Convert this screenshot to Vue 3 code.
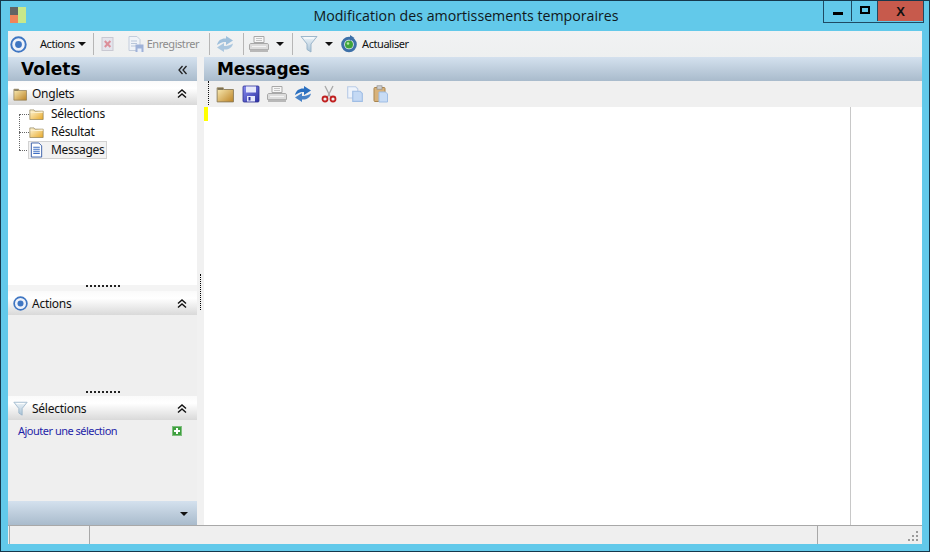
<script setup>
</script>

<template>
  <div class="window">
    <svg class="defs" width="0" height="0" aria-hidden="true">
      <defs>
        <linearGradient id="fold" x1="0" y1="0" x2="1" y2="1">
          <stop offset="0" stop-color="#fbeeb8" />
          <stop offset="1" stop-color="#bd8426" />
        </linearGradient>
        <linearGradient id="foldw" x1="0" y1="0" x2="1" y2="1">
          <stop offset="0" stop-color="#fff8dc" />
          <stop offset="1" stop-color="#e8a928" />
        </linearGradient>
        <linearGradient id="disk" x1="0" y1="0" x2="1" y2="1">
          <stop offset="0" stop-color="#8a8ef0" />
          <stop offset="1" stop-color="#2b2fa0" />
        </linearGradient>
        <linearGradient id="funnel" x1="0" y1="0" x2="0" y2="1">
          <stop offset="0" stop-color="#eef4f8" />
          <stop offset="1" stop-color="#a8c2d6" />
        </linearGradient>
        <symbol id="i-target" viewBox="0 0 16 16">
          <circle cx="8" cy="8" r="6.8" fill="#eef2fa" stroke="#3f76c2" stroke-width="1.8" />
          <circle cx="8" cy="8" r="3.2" fill="#3f76c2" />
        </symbol>
        <symbol id="i-folder" viewBox="0 0 16 16">
          <path d="M1 2.5h5.5v1.5H15.5v11H1z" fill="url(#fold)" stroke="#8a7a58" stroke-width=".8" />
          <path d="M1.4 2.9h4.8v1.3H1.4z" fill="#5e5540" />
        </symbol>
        <symbol id="i-folder-open" viewBox="0 0 18 14">
          <path d="M1 1.5h5l1 1.5h10v10H1z" fill="url(#foldw)" stroke="#8a7a50" stroke-width=".8" />
          <path d="M1.5 4.5 16.5 3.5v1.5H1.5z" fill="#fffbe8" />
        </symbol>
        <symbol id="i-doc" viewBox="0 0 16 16">
          <path d="M2.5 .5h8l3 3v12h-11z" fill="#fff" stroke="#3a5ea8" />
          <path d="M4.5 5h7M4.5 7.2h7M4.5 9.4h7M4.5 11.6h7" stroke="#3f6fc4" stroke-width="1.1" />
        </symbol>
        <symbol id="i-delete" viewBox="0 0 16 16">
          <rect x="2" y="1.5" width="11" height="13" fill="#e4e4ec" stroke="#c9c9d2" />
          <path d="M4.8 5 10.4 11M10.4 5 4.8 11" stroke="#dc8f9a" stroke-width="2" />
        </symbol>
        <symbol id="i-saveas" viewBox="0 0 18 18">
          <path d="M2 1.5h8l3 3v11H2z" fill="#f0f3f8" stroke="#c3cddc" />
          <path d="M4 6h6M4 8.5h6M4 11h5" stroke="#b9c6da" />
          <rect x="8.5" y="9.5" width="8" height="7.5" fill="#9fb2d8" />
          <rect x="10.5" y="13.5" width="4" height="3.5" fill="#e8eefa" />
        </symbol>
        <symbol id="i-refresh" viewBox="0 0 18 18">
          <path d="M1 10C2 5 6 3 10 3.5V1l7 4.5L10 10V7C6.5 6.5 4 8 1 10z" fill="currentColor" />
          <path d="M17 8.5C16 13 12 15 8 14.5V17L1 12.5 8 8v3c3.500.5 6-1 9-2.500z" fill="currentColor" opacity=".85" />
        </symbol>
        <symbol id="i-print" viewBox="0 0 20 18">
          <path d="M5 1.5h10v6H5z" fill="#f6f6f6" stroke="#a8a8a8" />
          <path d="M7 3.5h6M7 5.5h6" stroke="#c4c4c4" />
          <path d="M2 8.5h16c1 0 1.500.6 1.500 1.500v4.500H.5V10c0-.9.6-1.500 1.500-1.500z" fill="#dcdcdc" stroke="#a8a8a8" />
          <path d="M1 14.500h18V17H1z" fill="#b8b8b8" />
          <path d="M3 11.500h14" stroke="#f4f4f4" />
        </symbol>
        <symbol id="i-funnel" viewBox="0 0 18 18">
          <path d="M1 1.500h16l-6 7.500v8l-4-2.500V9z" fill="url(#funnel)" stroke="#94b0c6" stroke-width=".9" />
          <path d="M4 3h10" stroke="#fff" />
        </symbol>
        <symbol id="i-update" viewBox="0 0 18 18">
          <circle cx="9" cy="9.500" r="6.300" fill="none" stroke="#3d70a8" stroke-width="3" />
          <circle cx="9" cy="9.500" r="4" fill="#3ea33a" />
          <circle cx="8" cy="8.500" r="1.300" fill="#b6e6a8" />
          <path d="M10 0v6l4.500-3z" fill="#3d70a8" />
        </symbol>
        <symbol id="i-cut" viewBox="0 0 16 18">
          <path d="M4 1l5.500 11M12 1 6.500 12" stroke="#a9a9a9" stroke-width="1.300" />
          <circle cx="4" cy="14" r="2.500" fill="none" stroke="#c02020" stroke-width="1.800" />
          <circle cx="12" cy="14" r="2.500" fill="none" stroke="#c02020" stroke-width="1.800" />
        </symbol>
        <symbol id="i-copy" viewBox="0 0 16 16">
          <path d="M1.500 1.500h7l2 2v8h-9z" fill="#eef3fb" stroke="#b9cbe6" />
          <path d="M6 5.500h6.500l2 2v7H6z" fill="#c4d9f4" stroke="#9fbde4" />
        </symbol>
        <symbol id="i-paste" viewBox="0 0 16 18">
          <rect x="1" y="2.500" width="11" height="14" rx="1" fill="#d8b27a" stroke="#a9854f" />
          <rect x="4" y=".8" width="5" height="3.400" fill="#cfcfcf" stroke="#8e8e8e" stroke-width=".7" />
          <path d="M6 7h6.500l2 2v8H6z" fill="#c8dcf5" stroke="#9fbde4" />
        </symbol>
        <symbol id="i-collapse" viewBox="0 0 10 10">
          <path d="M1 4.500 5 1l4 3.500M1 8.500 5 5l4 3.500" fill="none" stroke="#111" stroke-width="1.400" />
        </symbol>
        <symbol id="i-left" viewBox="0 0 10 10">
          <path d="M4.500 1 1 5l3.500 4M8.500 1 5 5l3.500 4" fill="none" stroke="#222" stroke-width="1.300" />
        </symbol>
      </defs>
    </svg>

    <header class="titlebar">
      <div class="logo">
        <i class="l1"></i><i class="l2"></i><i class="l3"></i>
      </div>
      <div class="title">Modification des amortissements temporaires</div>
      <div class="winbtns">
        <div class="wb wb-min"><span></span></div>
        <div class="wb wb-max"><span></span></div>
        <div class="wb wb-close">X</div>
      </div>
    </header>

    <div class="client">
      <div class="mainbar">
        <svg class="ic17 first"><use href="#i-target" /></svg>
        <span class="tbtext actions">Actions</span><b class="caret small"></b>
        <span class="sep s1"></span>
        <svg class="ic16 del"><use href="#i-delete" /></svg>
        <svg class="ic18 save"><use href="#i-saveas" /></svg>
        <span class="tbtext dim">Enregistrer</span>
        <span class="sep s2"></span>
        <svg class="ic18 faded"><use href="#i-refresh" /></svg>
        <span class="sep s3"></span>
        <svg class="ic20 prn"><use href="#i-print" /></svg>
        <b class="caret c-prn"></b>
        <span class="sep s4"></span>
        <svg class="ic18 fil"><use href="#i-funnel" /></svg>
        <b class="caret c-fil"></b>
        <svg class="ic18 upd"><use href="#i-update" /></svg>
        <span class="tbtext act">Actualiser</span>
      </div>

      <div class="body">
        <aside class="left">
          <div class="bluehead volets">
            <span>Volets</span>
            <svg class="ic10"><use href="#i-left" /></svg>
          </div>

          <div class="panehead">
            <svg class="ic14"><use href="#i-folder" /></svg>
            <span>Onglets</span>
            <svg class="ic10 chev"><use href="#i-collapse" /></svg>
          </div>
          <div class="tree">
            <div class="tree-line"></div>
            <div class="node">
              <span class="dash"></span>
              <svg class="folderic"><use href="#i-folder-open" /></svg>
              <span class="nlabel">Sélections</span>
            </div>
            <div class="node">
              <span class="dash"></span>
              <svg class="folderic"><use href="#i-folder-open" /></svg>
              <span class="nlabel">Résultat</span>
            </div>
            <div class="node">
              <span class="dash"></span>
              <span class="selected">
                <svg class="docic"><use href="#i-doc" /></svg>
                <span class="nlabel">Messages</span>
              </span>
            </div>
          </div>
          <div class="grip"><span></span></div>

          <div class="panehead">
            <svg class="ic16b"><use href="#i-target" /></svg>
            <span>Actions</span>
            <svg class="ic10 chev"><use href="#i-collapse" /></svg>
          </div>
          <div class="pane-actions"></div>
          <div class="grip tall"><span></span></div>

          <div class="panehead">
            <svg class="ic16b"><use href="#i-funnel" /></svg>
            <span>Sélections</span>
            <svg class="ic10 chev"><use href="#i-collapse" /></svg>
          </div>
          <div class="pane-sel">
            <span class="link">Ajouter une sélection</span>
            <span class="plus"></span>
          </div>
          <div class="bluehead bottom"><b class="caret"></b></div>
        </aside>

        <div class="splitter"><span class="dots"></span></div>

        <main class="mainpane">
          <div class="bluehead messages"><span>Messages</span></div>
          <div class="subbar">
            <span class="vdots"></span>
            <svg class="sb"><use href="#i-folder" /></svg>
            <svg class="sb">
              <rect x="1" y="1" width="16" height="16" rx="1" fill="url(#disk)" stroke="#2b2f90" stroke-width=".8" />
              <rect x="4" y="1.500" width="10" height="6" fill="#e6e8fb" />
              <rect x="5" y="11" width="8" height="5.500" fill="#e6e8fb" />
              <rect x="6.500" y="12" width="2" height="3.500" fill="#2b2fa0" />
            </svg>
            <svg class="sb pr"><use href="#i-print" /></svg>
            <svg class="sb blue"><use href="#i-refresh" /></svg>
            <svg class="sb"><use href="#i-cut" /></svg>
            <svg class="sb"><use href="#i-copy" /></svg>
            <svg class="sb"><use href="#i-paste" /></svg>
          </div>
          <div class="content">
            <div class="marker"></div>
            <div class="vline"></div>
          </div>
        </main>
      </div>

      <footer class="status">
        <div class="st st1"></div>
        <div class="st st2"></div>
        <div class="st st3">
          <svg class="gripper" width="11" height="11" viewBox="0 0 11 11">
            <g fill="#9a9a9a">
              <rect x="8" y="0" width="2" height="2" />
              <rect x="4" y="4" width="2" height="2" />
              <rect x="8" y="4" width="2" height="2" />
              <rect x="0" y="8" width="2" height="2" />
              <rect x="4" y="8" width="2" height="2" />
              <rect x="8" y="8" width="2" height="2" />
            </g>
          </svg>
        </div>
      </footer>
    </div>
  </div>
</template>

<style scoped>
.defs { display: block; height: 0; width: 0; overflow: hidden; }
.window {
  width: 930px;
  height: 552px;
  box-sizing: border-box;
  border: 1px solid #16384c;
  background: #62c9ea;
  display: flex;
  flex-direction: column;
  font-family: "Noto Sans", "Open Sans", sans-serif;
  color: #111;
  overflow: hidden;
}
.titlebar {
  height: 30px;
  display: flex;
  align-items: flex-start;
  flex: none;
}
.logo {
  width: 16px;
  height: 16px;
  margin: 6px 0 0 9px;
  display: grid;
  grid-template-columns: 8px 8px;
  grid-template-rows: 8px 8px;
  flex: none;
}
.logo .l1 { background: #646464; }
.logo .l2 { background: #f0845a; }
.logo .l3 { background: #c8e88a; grid-column: 2; grid-row: 1 / 3; }
.title {
  flex: 1;
  text-align: center;
  font-size: 14.2px;
  line-height: 30px;
  font-family: "Open Sans", sans-serif;
  color: #101820;
  padding-left: 83px;
  white-space: nowrap;
}
.winbtns {
  display: flex;
  height: 21px;
  margin-right: 5px;
  border: 1px solid #1f4a63;
  border-top: 0;
  flex: none;
}
.wb { height: 20px; display: flex; align-items: center; justify-content: center; }
.wb-min { width: 27px; border-right: 1px solid #1f4a63; }
.wb-min span { width: 10px; height: 3px; background: #000; margin-top: 5px; }
.wb-max { width: 25px; border-right: 1px solid #1f4a63; }
.wb-max span { width: 6px; height: 4px; border: 2px solid #000; margin-top: -2px; }
.wb-close {
  width: 45px;
  background: #c75a4c;
  font: bold 13px "Liberation Sans", sans-serif;
  color: #111;
}

.client {
  margin: 0 7px 7px 7px;
  flex: 1;
  min-height: 0;
  display: flex;
  flex-direction: column;
  background: #efefef;
}
.mainbar {
  height: 26px;
  flex: none;
  display: flex;
  align-items: center;
  background: linear-gradient(#f1f2f3, #eef0f0);
}
.tbtext { font: 11px/14px "Noto Sans", sans-serif; white-space: nowrap; letter-spacing: -0.45px; color: #111; }
.tbtext.dim { color: #8c8c8c; margin-left: 2px; }
.ic16 { width: 16px; height: 16px; flex: none; }
.ic17 { width: 17px; height: 17px; flex: none; }
.ic18 { width: 18px; height: 18px; flex: none; }
.ic20 { width: 20px; height: 18px; flex: none; }
.ic10 { width: 10px; height: 10px; flex: none; }
.first { margin-left: 2px; }
.actions { margin-left: 13px; }
.caret {
  display: block;
  width: 0;
  height: 0;
  border-left: 4px solid transparent;
  border-right: 4px solid transparent;
  border-top: 4px solid #111;
  flex: none;
}
.caret.small { margin-left: 3px; }
.sep { width: 1px; height: 22px; background: #b6b6b6; flex: none; }
.s1 { margin-left: 7px; }
.del { margin-left: 6px; }
.save { margin-left: 11px; }
.s2 { margin-left: 10px; }
.faded { margin-left: 6px; color: #9fc0dc; }
.s3 { margin-left: 9px; }
.prn { margin-left: 5px; }
.c-prn { margin-left: 7px; }
.s4 { margin-left: 8px; }
.fil { margin-left: 7px; }
.c-fil { margin-left: 7px; }
.upd { margin-left: 7px; }
.tbtext.act { margin-left: 4px; }

.body { flex: 1; min-height: 0; display: flex; }
.left { width: 189px; flex: none; display: flex; flex-direction: column; }
.bluehead {
  height: 24px;
  flex: none;
  box-sizing: border-box;
  background: linear-gradient(#d4e1ee, #a9bbcc);
  display: flex;
  align-items: center;
  padding-top: 1px;
  font: bold 17px/23px "DejaVu Sans", sans-serif;
  color: #000;
}
.volets { padding-left: 13px; padding-right: 9px; justify-content: space-between; }
.messages { padding-left: 13px; letter-spacing: -0.15px; }
.bottom { justify-content: flex-end; padding-right: 9px; }
.panehead {
  height: 24px;
  flex: none;
  box-sizing: border-box;
  display: flex;
  align-items: center;
  padding-top: 1px;
  font: 12px/23px "Noto Sans", sans-serif;
  letter-spacing: -0.25px;
  background: linear-gradient(#fafafa 0%, #ffffff 30%, #d9d9d9 100%);
  padding-left: 5px;
  color: #111;
}
.ic14 { width: 14px; height: 14px; margin-right: 5px; flex: none; }
.ic16b { width: 15px; height: 15px; margin-right: 4px; flex: none; }
.chev { margin-left: auto; margin-right: 10px; }
.tree { height: 180px; background: #fff; flex: none; position: relative; }
.tree-line {
  position: absolute;
  left: 11px;
  top: 9px;
  height: 36px;
  border-left: 1px dotted #666;
}
.node { height: 18px; display: flex; align-items: center; }
.dash { width: 10px; margin-left: 11px; border-top: 1px dotted #666; flex: none; }
.folderic { width: 15px; height: 13px; margin-right: 7px; flex: none; }
.docic { width: 15px; height: 16px; margin-right: 7px; flex: none; }
.nlabel { font: 12px/16px "Noto Sans", sans-serif; letter-spacing: -0.3px; color: #111; }
.selected {
  display: flex;
  align-items: center;
  background: #f2f2f2;
  border: 1px solid #d2d2d2;
  height: 18px;
  box-sizing: border-box;
  padding-right: 2px;
  margin-left: -1px;
}
.grip { height: 6px; flex: none; display: flex; justify-content: center; align-items: flex-start; background: #f4f4f4; }
.grip.tall { height: 9px; background: #efefef; align-items: center; }
.grip span { width: 34px; border-top: 2px dotted #222; }
.pane-actions { height: 72px; flex: none; background: #efefef; }
.pane-sel { flex: 1; min-height: 0; padding: 4px 0 0 10px; display: flex; align-items: flex-start; background: #efefef; }
.link { font: 11px/14px "Noto Sans", sans-serif; color: #1f1fa8; letter-spacing: -0.5px; white-space: nowrap; }
.plus {
  width: 10px;
  height: 10px;
  margin: 2px 15px 0 auto;
  background:
    linear-gradient(#fff, #fff) center / 6px 2px no-repeat,
    linear-gradient(#fff, #fff) center / 2px 6px no-repeat,
    #3fa03f;
  border: 1px solid #7fbf7f;
  box-sizing: border-box;
}

.splitter { width: 7px; flex: none; background: #f1f1f1; position: relative; }
.dots {
  position: absolute;
  left: 3px;
  top: 217px;
  height: 36px;
  border-left: 1px dotted #000;
}
.mainpane {
  flex: 1;
  min-width: 0;
  display: flex;
  flex-direction: column;
}
.subbar {
  height: 26px;
  flex: none;
  display: flex;
  align-items: center;
  padding-left: 4px;
  gap: 8px;
  background: #f0f0f0;
}
.vdots { width: 0; height: 24px; border-left: 1px dotted #111; align-self: flex-start; margin-right: -1px; }
.sb { width: 18px; height: 18px; flex: none; }
.sb.pr { width: 20px; margin: 0 -1px; }
.blue { color: #2a6fc0; }
.content { flex: 1; min-height: 0; background: #fff; display: flex; }
.marker { width: 4px; height: 14px; background: #ffff00; flex: none; }
.vline { width: 1px; background: #c8c8c8; margin-left: 642px; flex: none; }

.status {
  height: 19px;
  flex: none;
  display: flex;
  border-top: 1px solid #a8a8a8;
  box-sizing: border-box;
  background: #efefef;
}
.st { height: 18px; box-sizing: border-box; }
.st1 { width: 81px; border-left: 1px solid #a8a8a8; border-right: 1px solid #a8a8a8; margin-left: 1px; }
.st2 { width: 728px; border-right: 1px solid #a8a8a8; }
.st3 { flex: 1; display: flex; justify-content: flex-end; align-items: flex-end; padding: 0 3px 2px 0; }
</style>

<style>
html, body { margin: 0; padding: 0; background: #62c9ea; }
</style>
